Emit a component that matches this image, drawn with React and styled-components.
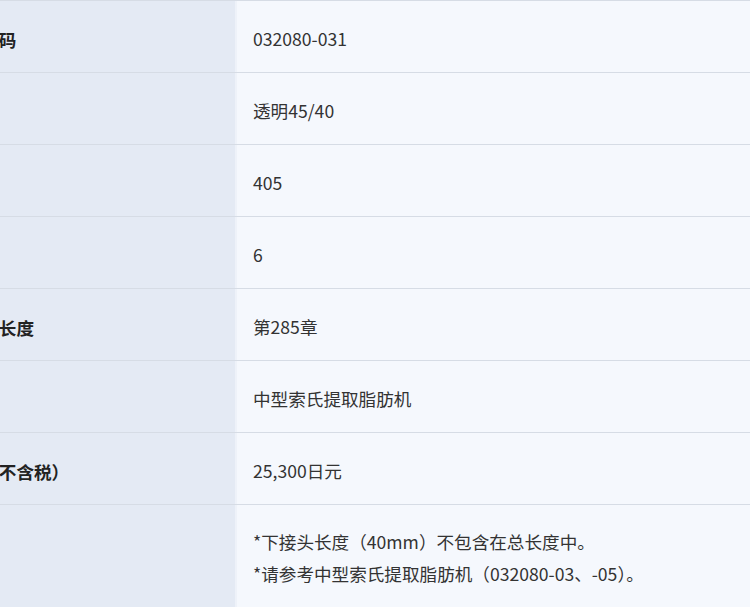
import React from "react";
import styled, { createGlobalStyle } from "styled-components";

const GlobalStyle = createGlobalStyle`
  html, body {
    margin: 0;
    padding: 0;
    background: #f5f8fd;
    overflow: hidden;
  }
  body {
    font-family: "Noto Sans CJK SC", "Noto Sans", sans-serif;
    color: #333;
  }
`;

const Table = styled.div`
  width: 816px;
  margin-left: -66px;
  display: flex;
  flex-direction: column;
  border-top: 1px solid #d6dce5;
`;

const Row = styled.div`
  display: grid;
  grid-template-columns: 303px 1fr;
  min-height: ${(p) => (p.$tall ? "112px" : "71px")};
  border-bottom: 1px solid #d6dce5;
`;

const Label = styled.div`
  display: flex;
  align-items: center;
  padding: 5px 12px 0;
  background: #e4eaf4;
  border-right: 2px solid #eef2f9;
  font-size: 17.6px;
  font-weight: 700;
  color: #222;
`;

const Value = styled.div`
  display: flex;
  flex-direction: column;
  justify-content: center;
  padding: ${(p) => (p.$tall ? "0 16px 6px" : "5px 16px 0")};
  background: #f5f8fd;
  font-size: 17.6px;
  line-height: 1.8;
  color: #333;
`;

const rows = [
  ["产品代码", "032080-031"],
  ["颜色", "透明45/40"],
  ["容量", "405"],
  ["数量", "6"],
  ["产品总长度", "第285章"],
  ["适用", "中型索氏提取脂肪机"],
  ["价格（不含税）", "25,300日元"],
];

export default function App() {
  return (
    <>
      <GlobalStyle />
      <Table>
        {rows.map(([k, v]) => (
          <Row key={k}>
            <Label>{k}</Label>
            <Value>{v}</Value>
          </Row>
        ))}
        <Row $tall>
          <Label>备注</Label>
          <Value $tall>
            <div>*下接头长度（40mm）不包含在总长度中。</div>
            <div>*请参考中型索氏提取脂肪机（032080-03、-05）。</div>
          </Value>
        </Row>
      </Table>
    </>
  );
}
